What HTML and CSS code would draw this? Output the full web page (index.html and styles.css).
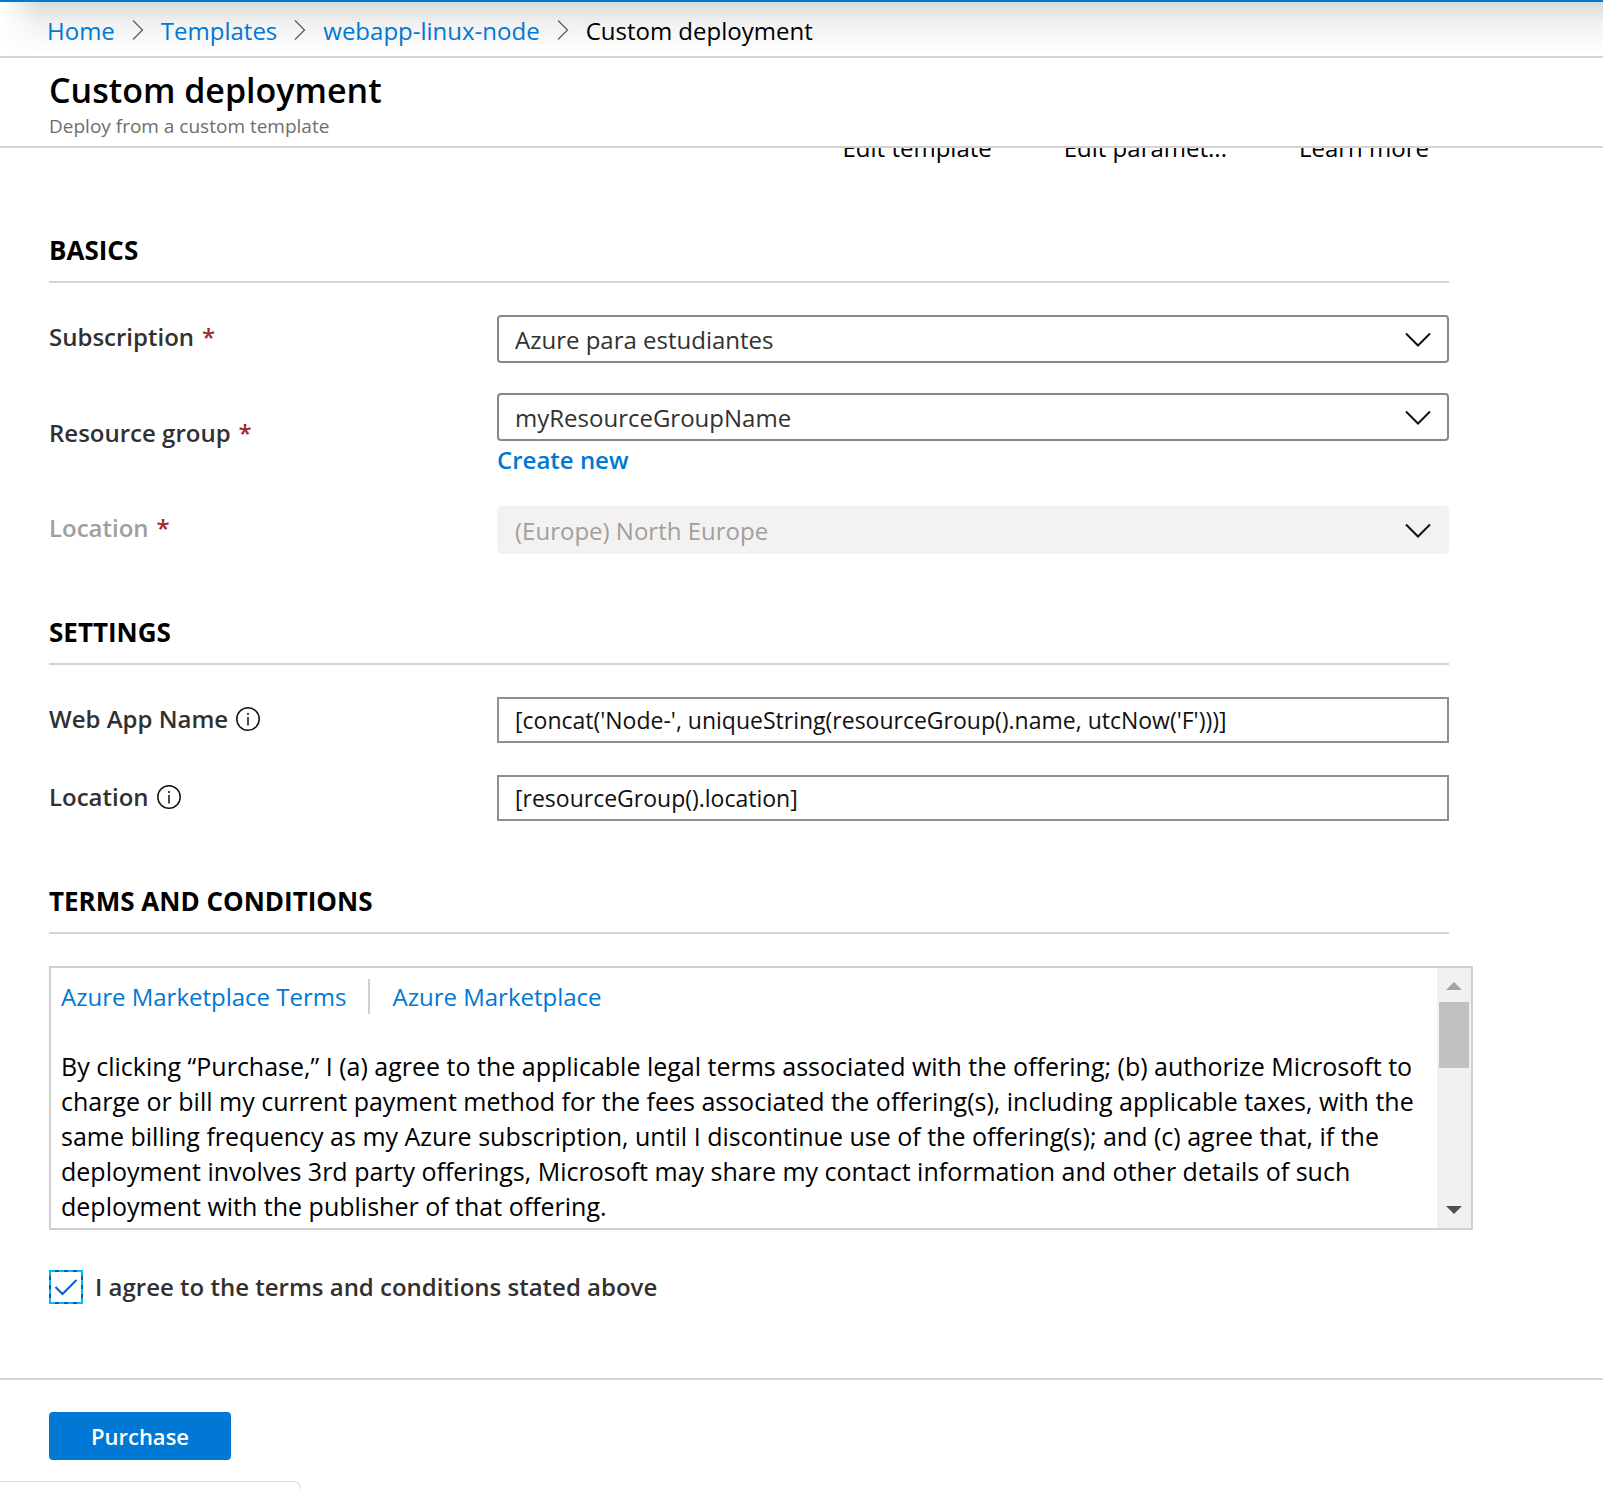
FILE: index.html
```html
<!DOCTYPE html>
<html lang="en">
<head>
<meta charset="utf-8">
<meta name="viewport" content="width=device-width, initial-scale=1">
<title>Custom deployment</title>
<link rel="stylesheet" href="styles.css">
</head>
<body>
<div class="blade">
  <nav class="breadcrumb" aria-label="Breadcrumb">
    <a href="#">Home</a>
    <svg class="separator" viewBox="0 0 12 20" aria-hidden="true"><path d="M1 .5 10.500 10 1 19.500"/></svg>
    <a href="#">Templates</a>
    <svg class="separator" viewBox="0 0 12 20" aria-hidden="true"><path d="M1 .5 10.500 10 1 19.500"/></svg>
    <a href="#">webapp-linux-node</a>
    <svg class="separator" viewBox="0 0 12 20" aria-hidden="true"><path d="M1 .5 10.500 10 1 19.500"/></svg>
    <span>Custom deployment</span>
  </nav>

  <header class="header">
    <h1>Custom deployment</h1>
    <p>Deploy from a custom template</p>
  </header>

  <main class="content">
    <div class="actions">
      <button type="button">Edit template</button>
      <button type="button">Edit paramet...</button>
      <button type="button">Learn more</button>
    </div>

    <section class="section">
      <h2>BASICS</h2>
      <div class="fields">
        <div class="field">
          <label for="subscription">Subscription <span class="required">*</span></label>
          <div class="select">
            <select id="subscription"><option>Azure para estudiantes</option></select>
            <svg viewBox="0 0 26 16" aria-hidden="true"><path d="M1 1.500 13 13.500 25 1.500"/></svg>
          </div>
        </div>
        <div class="field">
          <label for="group">Resource group <span class="required">*</span></label>
          <div>
            <div class="select">
              <select id="group"><option>myResourceGroupName</option></select>
              <svg viewBox="0 0 26 16" aria-hidden="true"><path d="M1 1.500 13 13.500 25 1.500"/></svg>
            </div>
            <a class="create" href="#">Create new</a>
          </div>
        </div>
        <div class="field disabled">
          <label for="region">Location <span class="required">*</span></label>
          <div class="select">
            <select id="region" disabled><option>(Europe) North Europe</option></select>
            <svg viewBox="0 0 26 16" aria-hidden="true"><path d="M1 1.500 13 13.500 25 1.500"/></svg>
          </div>
        </div>
      </div>
    </section>

    <section class="section">
      <h2>SETTINGS</h2>
      <div class="fields settings">
        <div class="field">
          <label for="app-name">Web App Name
            <svg class="info" viewBox="0 0 24 24" aria-hidden="true"><circle cx="12" cy="12" r="11.200"/><path d="M12 10v8.500M12 6v2"/></svg>
          </label>
          <input id="app-name" type="text" value="[concat('Node-', uniqueString(resourceGroup().name, utcNow('F')))]">
        </div>
        <div class="field">
          <label for="location">Location
            <svg class="info" viewBox="0 0 24 24" aria-hidden="true"><circle cx="12" cy="12" r="11.200"/><path d="M12 10v8.500M12 6v2"/></svg>
          </label>
          <input id="location" type="text" value="[resourceGroup().location]">
        </div>
      </div>
    </section>

    <section class="section">
      <h2>TERMS AND CONDITIONS</h2>
      <div class="terms">
        <div class="terms-text">
          <div class="terms-links">
            <a href="#">Azure Marketplace Terms</a>
            <a href="#">Azure Marketplace</a>
          </div>
          <p>By clicking “Purchase,” I (a) agree to the applicable legal terms associated with the offering; (b) authorize Microsoft to charge or bill my current payment method for the fees associated the offering(s), including applicable taxes, with the same billing frequency as my Azure subscription, until I discontinue use of the offering(s); and (c) agree that, if the deployment involves 3rd party offerings, Microsoft may share my contact information and other details of such deployment with the publisher of that offering.</p>
        </div>
        <div class="scrollbar" aria-hidden="true">
          <svg class="arrow up" viewBox="0 0 16 8"><path d="M0 8 8 0l8 8z"/></svg>
          <div class="thumb"></div>
          <svg class="arrow down" viewBox="0 0 16 8"><path d="M0 0h16L8 8z"/></svg>
        </div>
      </div>
      <div class="agree">
        <span class="checkbox">
          <input id="agree" type="checkbox" checked>
          <svg viewBox="0 0 34 34" aria-hidden="true">
            <rect class="ring" x="1" y="1" width="32" height="32"/>
            <path class="dashes" d="M6 1h24M6 33h24M1 6v24M33 6v24"/>
            <path class="tick" d="M6.500 17 13.500 24 27.500 10"/>
          </svg>
        </span>
        <label for="agree">I agree to the terms and conditions stated above</label>
      </div>
    </section>
  </main>

  <footer class="footer">
    <button type="submit">Purchase</button>
  </footer>
  <div class="status"></div>
</div>
</body>
</html>
```
FILE: styles.css
```css
* {
  box-sizing: border-box;
}

body {
  margin: 0;
  background: #fff;
  color: #000;
  font: 400 25px/35px "Open Sans", "Segoe UI", sans-serif;
}

h1, h2, p {
  margin: 0;
}

a {
  color: #0078d4;
  text-decoration: none;
}

button, input, select {
  font-family: inherit;
}

.blade {
  position: relative;
  min-height: 100vh;
  overflow: hidden;
}

/* Breadcrumb */
.breadcrumb {
  display: flex;
  align-items: center;
  gap: 17px;
  height: 58px;
  padding: 2px 47px 0;
  border-top: 2px solid #0078d4;
  border-bottom: 2px solid #d4d4d4;
  background:
    linear-gradient(to right, #fff, rgba(255, 255, 255, 0) 40px),
    linear-gradient(#dadada, #f1f1f1 40%, #fff 95%);
  font-size: 24px;
}

.separator {
  width: 12px;
  height: 20px;
  fill: none;
  stroke: #605e5c;
  stroke-width: 1.3;
}

/* Title */
.header {
  padding: 8px 49px;
  border-bottom: 2px solid #d4d4d4;
}

.header h1 {
  font-size: 34px;
  line-height: 48px;
  font-weight: 600;
}

.header p {
  color: #6e6e6e;
  font-size: 19px;
  line-height: 24px;
}

/* Content */
.content {
  overflow: hidden;
  padding: 0 154px 74px 49px;
}

.actions {
  display: flex;
  justify-content: flex-end;
  gap: 72px;
  margin-top: -16px;
  padding-right: 20px;
}

.actions button {
  padding: 0;
  border: 0;
  background: none;
  color: #000;
  font-size: 24px;
  line-height: 32px;
}

.section {
  margin-top: 60px;
}

.actions + .section {
  margin-top: 68px;
}

.section h2 {
  margin-bottom: 32px;
  padding-bottom: 13px;
  border-bottom: 2px solid #d4d4d4;
  font-size: 26px;
  line-height: 36px;
  font-weight: 700;
}

.fields {
  display: flex;
  flex-direction: column;
  gap: 30px;
}

.field {
  display: grid;
  grid-template-columns: 32% 1fr;
  align-items: center;
}

.field label {
  display: flex;
  align-items: center;
  gap: 8px;
  padding-bottom: 5px;
  color: #323130;
  font-size: 24px;
  font-weight: 600;
}

.required {
  color: #a4262c;
}

.info {
  width: 24px;
  height: 24px;
  fill: none;
  stroke: #111;
  stroke-width: 1.5;
}

.select {
  position: relative;
}

.select select {
  display: block;
  appearance: none;
  width: 100%;
  height: 48px;
  padding: 0 60px 0 16px;
  border: 2px solid #8a8886;
  border-radius: 4px;
  background: #fff;
  color: #323130;
  font-size: 24px;
}

.select svg {
  position: absolute;
  top: 17px;
  right: 18px;
  width: 26px;
  height: 16px;
  fill: none;
  stroke: #111;
  stroke-width: 2;
  pointer-events: none;
}

.create {
  display: block;
  width: max-content;
  padding-top: 3px;
  font-size: 24px;
  line-height: 32px;
  font-weight: 600;
}

.disabled label {
  color: #a19f9d;
}

.disabled .select select {
  border-color: #f3f2f1;
  background: #f3f2f1;
  color: #a19f9d;
  opacity: 1;
}

.field input {
  width: 100%;
  height: 46px;
  padding: 0 16px;
  border: 2px solid #8f8f8f;
  border-radius: 0;
  background: #fff;
  color: #111;
  font-size: 23px;
}

.settings {
  gap: 32px;
  padding-bottom: 2px;
}

.settings label {
  padding-bottom: 3px;
}

/* Terms */
.terms {
  display: flex;
  height: 264px;
  margin-right: -24px;
  border: 2px solid #d0d0d0;
}

.terms-text {
  flex: 1;
  padding: 11px 10px 0;
}

.terms-links {
  display: flex;
  gap: 22px;
  margin-bottom: 35px;
  font-size: 24px;
}

.terms-links a + a {
  padding-left: 22px;
  border-left: 2px solid #d0d0d0;
}

.scrollbar {
  display: flex;
  flex-direction: column;
  align-items: center;
  width: 34px;
  padding: 14px 2px;
  background: #f1f1f1;
}

.arrow {
  width: 16px;
  height: 8px;
  fill: #a3a3a3;
}

.thumb {
  width: 100%;
  height: 66px;
  margin-top: 12px;
  background: #c1c1c1;
}

.arrow.down {
  margin-top: auto;
  fill: #505050;
}

.agree {
  display: flex;
  align-items: center;
  gap: 12px;
  margin-top: 40px;
  color: #323130;
  font-size: 24px;
  line-height: 34px;
  font-weight: 600;
}

.checkbox {
  position: relative;
  width: 34px;
  height: 34px;
}

.checkbox input {
  display: block;
  appearance: none;
  width: 34px;
  height: 34px;
  margin: 0;
}

.checkbox svg {
  position: absolute;
  inset: 0;
  fill: none;
  stroke-width: 2;
  pointer-events: none;
}

.ring {
  stroke: #00bcf2;
}

.dashes {
  stroke: #0f5aa8;
  stroke-dasharray: 4 5;
}

.tick {
  stroke: #015cda;
}

/* Footer */
.footer {
  padding: 32px 49px 29px;
  border-top: 2px solid #d4d4d4;
}

.footer button {
  width: 182px;
  height: 48px;
  padding: 0;
  border: 0;
  border-radius: 4px;
  background: #0078d4;
  color: #fff;
  font-size: 22px;
  font-weight: 600;
}

/* Edge of the browser's link status bubble */
.status {
  position: absolute;
  bottom: 0;
  left: 0;
  width: 301px;
  height: 8px;
  border: 1px solid #dcdcdc;
  border-width: 1px 1px 0 0;
  border-top-right-radius: 8px;
}
```
